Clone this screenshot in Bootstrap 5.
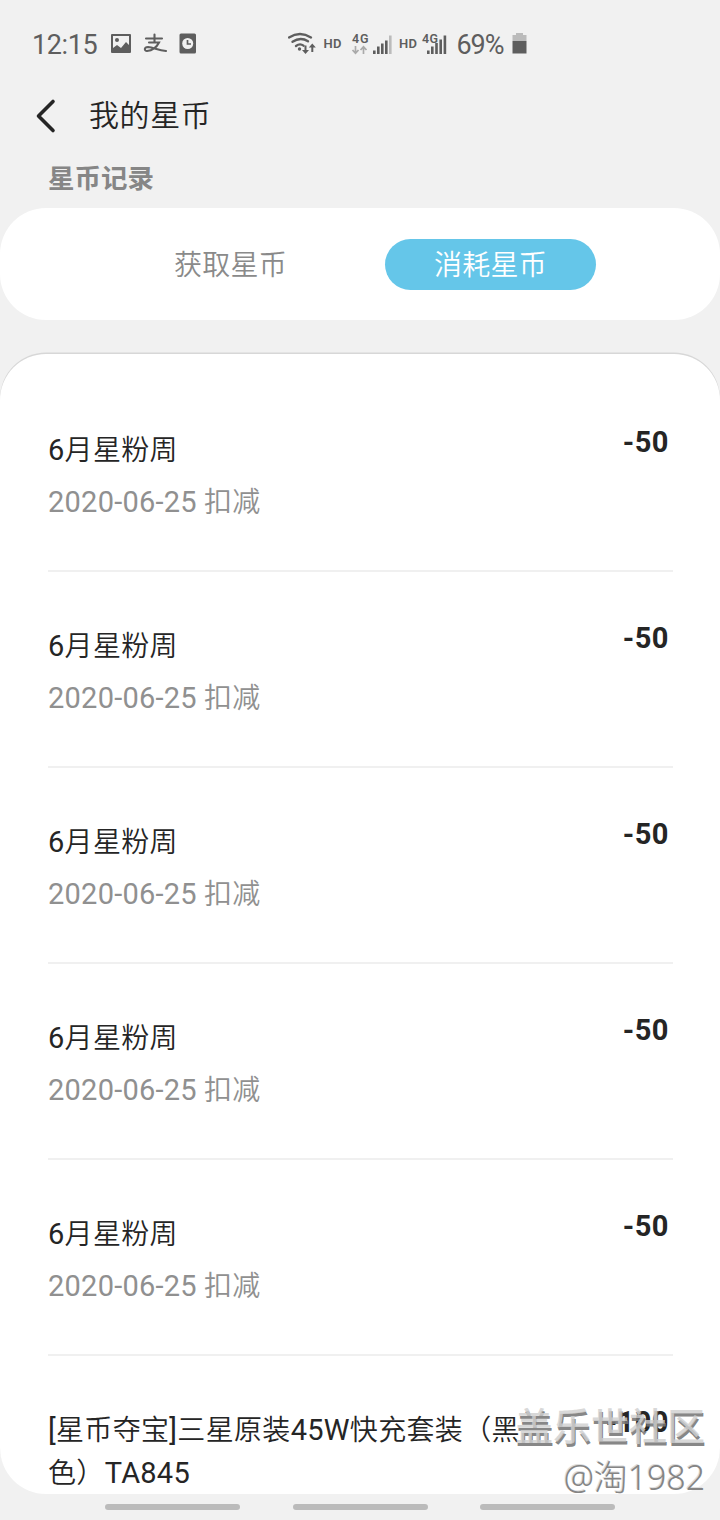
<!DOCTYPE html>
<html lang="zh-CN">
<head>
<meta charset="utf-8">
<meta name="viewport" content="width=device-width, initial-scale=1">
<title>我的星币</title>
<link href="https://cdn.jsdelivr.net/npm/bootstrap@5.3.0/dist/css/bootstrap.min.css" rel="stylesheet">
<style>
body{background:#f1f1f1;font-family:Roboto,"Noto Sans CJK SC",sans-serif;color:#252525;height:1520px;overflow:hidden}
.status-bar{height:88px;padding-left:32px;color:#5e5e5e}
.status-bar svg{display:block;flex:none}
.clock{font-size:27px;line-height:32px;width:78px;letter-spacing:-.4px;padding-top:2px}
.app-bar{height:56px;padding-left:34px}
.app-bar h1{font-size:30px;line-height:40px;letter-spacing:.6px;margin:0 0 0 31px;font-weight:350}
.section-label{height:64px;padding:16px 48px 0;font-size:26.5px;line-height:38px;font-weight:700;color:#868686}
.tab-card{height:112px;border-radius:46px;background:#fff;padding-left:2px}
.tab-item{width:211px;height:51px;line-height:53px;font-size:28px;letter-spacing:.3px;font-weight:350;color:#8a8a8a;border-radius:26px}
.tab-item:first-child{padding-right:2px}
.tab-item.active{background:#65c6e9;color:#fff}
.record-card{height:1140px;margin-top:34px;border-radius:46px;background:#fff;box-shadow:0 -1.5px 0 #d7d7d7;padding:22px 47px 0 48px}
.record{height:196.1px;border-bottom:2px solid #f0f0f0;padding-top:53px}
.record:last-child{border:0}
.record-name{font-size:28px;line-height:43px;letter-spacing:.35px;font-weight:350}
.record-date{font-size:28px;line-height:40px;letter-spacing:.2px;color:#909090;margin-top:11px;font-weight:350}
.latin{font-weight:400;font-size:29px;letter-spacing:.25px;line-height:1}
.amount{font-size:29px;line-height:36px;font-weight:700;letter-spacing:.5px;padding-right:4px;margin-top:-5px}
.nav-strip{height:26px;padding:10px 105px 0}
.nav-strip span{width:135px;height:6px;border-radius:3px;background:#bbb}
.watermark{position:absolute;right:15px;top:1399px;text-align:right;white-space:nowrap}
.wm-site{font-size:38px;line-height:56px;font-weight:500;color:rgba(208,208,208,.82);text-shadow:1px 3px 0 rgba(118,118,118,.9)}
.wm-user{font-family:"Noto Sans","Noto Sans CJK SC",sans-serif;font-size:34px;line-height:44px;font-weight:300;color:#858585;text-shadow:-1px -1px 0 #ddd;letter-spacing:-.1px}
</style>
</head>
<body>
<header class="status-bar d-flex align-items-center">
  <span class="clock">12:15</span>
  <svg width="178" height="30" viewBox="110 29 178 30" fill="#5e5e5e">
    <path fill-rule="evenodd" d="M112 34h18q1 0 1 1v17q0 1-1 1h-18q-1 0-1-1v-17q0-1 1-1zm1 2v12l4-3 4 3 5-6 3 3v-9z"/><circle cx="117" cy="40" r="2"/>
    <g fill="none" stroke="#5e5e5e" stroke-width="2.1" stroke-linecap="round"><path d="M146 38.500h16M154.500 34.500v7.500M149 42.500h10c-2 4-6 8-12 8.500-3 0-3-4 1-4 6 .5 10 3.500 18 4"/></g>
    <rect x="179.500" y="33.500" width="16.500" height="20" rx="1.500"/><circle cx="187.700" cy="43.500" r="5.500" fill="#f1f1f1"/><path d="M187.500 40v4h3.500" fill="none" stroke="#5e5e5e" stroke-width="1.700"/>
  </svg>
  <svg width="250" height="34" viewBox="288 27 250 34" fill="#5e5e5e" font-family="Roboto, sans-serif">
    <g fill="none" stroke="#5e5e5e" stroke-width="2.300" stroke-linecap="round"><path d="M289 37.500q11-7 22 0M292.500 41.800q8-5.300 15.500-.5M296 46q4-3 7.500-.3"/></g>
    <circle cx="299.500" cy="49" r="1.700"/>
    <path d="M304.500 45.500h2v4.500h2.500l-3.500 4-3.500-4h2.500zM313.300 52h-2v-4.500h-2.500l3.500-4 3.500 4h-2.500z"/>
    <text x="323.500" y="47.500" font-size="13" font-weight="600" textLength="18">HD</text>
    <text x="352" y="43" font-size="12.500" font-weight="600" textLength="16.500">4G</text>
    <path d="M355.500 46v7M352.500 50l3 3.200 3-3.200M363.500 54v-7M360.500 50l3-3.200 3 3.200" fill="none" stroke="#aaa" stroke-width="1.700"/>
    <path d="M373 50.500h2.600v3.500H373zM377 46.500h2.600V54H377zM381 43.500h2.600V54H381zM385 40.500h2.600V54H385z"/><path fill="#bbb" d="M389 35.500h2.600V54H389z"/>
    <text x="399" y="47.500" font-size="13" font-weight="600" textLength="18">HD</text>
    <text x="422" y="43" font-size="12.500" font-weight="600" textLength="16">4G</text>
    <path d="M427 50.500h2.600v3.500H427zM431 46.500h2.600V54H431zM435.200 43h2.600V54h-2.600zM439.400 39.500h2.600V54h-2.600zM443.600 35.500h2.600V54h-2.600z"/>
    <text x="456.500" y="53.500" font-size="27" textLength="48">69%</text>
    <path fill="#bbb" d="M516 33h7v2h3.500v6H512.500v-6h3.500z"/><path d="M512.500 41h14v12.500h-14z"/>
  </svg>
</header>
<nav class="app-bar d-flex align-items-center">
  <svg width="24" height="36" viewBox="0 0 24 36" fill="none" stroke="#252525" stroke-width="3.600" stroke-linecap="round" stroke-linejoin="round"><path d="M19 3.500L4.500 18 19 32.500"/></svg>
  <h1>我的星币</h1>
</nav>
<div class="section-label">星币记录</div>
<div class="tab-card d-flex justify-content-center align-items-center">
  <div class="tab-item text-center">获取星币</div>
  <div class="tab-item active text-center ms-5">消耗星币</div>
</div>
<main class="record-card overflow-hidden">
  <div class="record d-flex justify-content-between"><div><div class="record-name"><span class="latin">6</span>月星粉周</div><div class="record-date"><span class="latin">2020-06-25</span> 扣减</div></div><div class="amount">-50</div></div>
  <div class="record d-flex justify-content-between"><div><div class="record-name"><span class="latin">6</span>月星粉周</div><div class="record-date"><span class="latin">2020-06-25</span> 扣减</div></div><div class="amount">-50</div></div>
  <div class="record d-flex justify-content-between"><div><div class="record-name"><span class="latin">6</span>月星粉周</div><div class="record-date"><span class="latin">2020-06-25</span> 扣减</div></div><div class="amount">-50</div></div>
  <div class="record d-flex justify-content-between"><div><div class="record-name"><span class="latin">6</span>月星粉周</div><div class="record-date"><span class="latin">2020-06-25</span> 扣减</div></div><div class="amount">-50</div></div>
  <div class="record d-flex justify-content-between"><div><div class="record-name"><span class="latin">6</span>月星粉周</div><div class="record-date"><span class="latin">2020-06-25</span> 扣减</div></div><div class="amount">-50</div></div>
  <div class="record d-flex justify-content-between"><div class="record-name text-nowrap"><span class="latin">[</span>星币夺宝<span class="latin">]</span>三星原装<span class="latin">45W</span>快充套装（黑<br>色）<span class="latin">TA845</span></div><div class="amount">-100</div></div>
</main>
<footer class="nav-strip d-flex justify-content-between"><span></span><span></span><span></span></footer>
<div class="watermark"><div class="wm-site">盖乐世社区</div><div class="wm-user">@淘1982</div></div>
<script src="https://cdn.jsdelivr.net/npm/bootstrap@5.3.0/dist/js/bootstrap.bundle.min.js"></script>
</body>
</html>
